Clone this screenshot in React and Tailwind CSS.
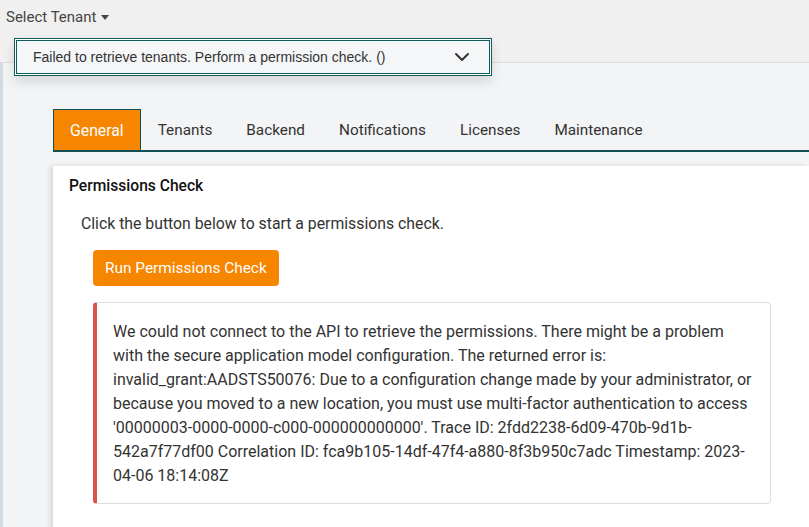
import { ChevronDown } from 'lucide-react';

const tabs = ['General', 'Tenants', 'Backend', 'Notifications', 'Licenses', 'Maintenance'];

export default function App() {
  return (
    <div className="relative w-[809px] h-[527px] overflow-hidden bg-[#f0f0f0] text-[#212529]" style={{ fontFamily: 'Roboto, "Noto Sans", sans-serif' }}>
      {/* top bar */}
      <div className="h-[62px] pl-[6px] pt-[6px]">
        <button className="flex items-center gap-[5px] text-[15px] text-[#444]">
          Select Tenant
          <span className="mt-[1px] border-x-[4px] border-t-[5px] border-x-transparent border-t-[#444]" />
        </button>
      </div>

      {/* tenant select, open over the page */}
      <div className="absolute left-[14px] top-[38px] z-10 w-[478px] h-[38px] border border-[#0e5c5c] p-px bg-white shadow-[0_6px_12px_rgba(0,0,0,0.12)]">
        <div className="h-full border border-[#0e5c5c] bg-[#f5f6f7] flex items-center justify-between pl-[16px] pr-[15px]">
          <span className="text-[14px] text-[#333]" style={{ fontFamily: '"Liberation Sans", Arial, sans-serif' }}>
            Failed to retrieve tenants. Perform a permission check. ()
          </span>
          <ChevronDown size={24} strokeWidth={2} className="text-[#333]" />
        </div>
      </div>

      <div className="flex h-[465px]">
        <div className="w-[3px] bg-[#d3dbe2]" />
        <div className="flex-1 border-t border-[#dcdcdc] bg-[#f3f4f6] pl-[50px] pt-[46px]">
          {/* tabs */}
          <div className="flex h-[43px] border-b-2 border-[#134f52]">
            {tabs.map((t, i) => (
              <div
                key={t}
                className={
                  i === 0
                    ? 'px-[16px] pt-[2px] flex items-center text-[15.8px] bg-[#f68500] text-white border border-b-0 border-[#134f52]'
                    : 'px-[17px] pt-[2px] flex items-center text-[15.3px] text-[#333]'
                }
              >
                {t}
              </div>
            ))}
          </div>

          {/* card */}
          <div className="mt-[14px] h-[400px] bg-white shadow-[-3px_0_5px_rgba(0,0,0,0.12)] pl-[16px] pt-[9px]">
            <div className="text-[15.6px] font-medium text-[#111]">Permissions Check</div>
            <div className="pl-[12px] pt-[14px]">
              <p className="text-[15.8px] text-[#333]">Click the button below to start a permissions check.</p>
              <div className="pl-[12px] pt-[14px]">
                <button className="h-[36px] px-[12px] rounded-[4px] bg-[#f68500] text-white text-[15.4px]">
                  Run Permissions Check
                </button>
                <div className="mt-[16px] w-[678px] rounded-[4px] border border-[#dedede] border-l-[4px] border-l-[#d9534f] pl-[16px] pr-[17px] pt-[17px] pb-[15px] text-[16px] leading-[24px] text-[#333]">
                  We could not connect to the API to retrieve the permissions. There might be a problem with the secure application model configuration. The returned error is: invalid_grant:AADSTS50076: Due to a configuration change made by your administrator, or because you moved to a new location, you must use multi-factor authentication to access '00000003-0000-0000-c000-000000000000'. Trace ID: 2fdd2238-6d09-470b-9d1b-542a7f77df00 Correlation ID: fca9b105-14df-47f4-a880-8f3b950c7adc Timestamp: 2023-04-06 18:14:08Z
                </div>
              </div>
            </div>
          </div>
        </div>
      </div>
    </div>
  );
}
